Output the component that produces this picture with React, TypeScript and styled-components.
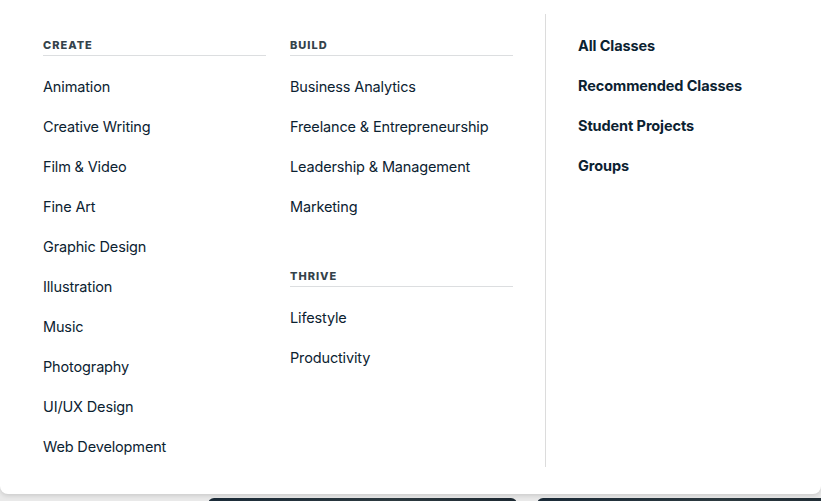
import React from 'react';
import styled, { createGlobalStyle } from 'styled-components';

const GlobalStyle = createGlobalStyle`
  html, body {
    margin: 0;
    padding: 0;
    height: 100%;
    overflow: hidden;
    background: #e9e9e9;
    font-family: Inter, 'Liberation Sans', sans-serif;
  }
  * {
    box-sizing: border-box;
  }
`;

const Page = styled.div`
  width: 821px;
  height: 501px;
  display: flex;
  flex-direction: column;
  overflow: hidden;
`;

const Panel = styled.nav`
  position: relative;
  z-index: 2;
  flex-shrink: 0;
  height: 494px;
  background: #ffffff;
  border-radius: 0 0 8px 8px;
  box-shadow: 0 2px 4px rgba(0, 0, 0, 0.12);
  padding: 14px 0 27px 43px;
  display: flex;
  flex-direction: row;
  align-items: stretch;
`;

const Categories = styled.div`
  display: grid;
  grid-template-columns: 223px 223px;
  column-gap: 24px;
  padding-top: 23px;
`;

const Column = styled.div`
  display: flex;
  flex-direction: column;
`;

const Section = styled.section<{ $spaced?: boolean }>`
  margin-top: ${(p) => (p.$spaced ? '51px' : '0')};
`;

const Heading = styled.h4`
  margin: 0;
  padding-bottom: 2px;
  border-bottom: 1px solid #dcdee0;
  font-size: 11px;
  line-height: 16px;
  font-weight: 800;
  letter-spacing: 1px;
  text-transform: uppercase;
  color: #34424a;
`;

const LinkList = styled.ul<{ $bold?: boolean }>`
  list-style: none;
  margin: ${(p) => (p.$bold ? '0' : '21px 0 0 0')};
  padding: 0;
  display: flex;
  flex-direction: column;
  gap: 20px;
`;

const LinkItem = styled.li<{ $bold?: boolean }>`
  font-size: 14.5px;
  line-height: 20px;
  letter-spacing: ${(p) => (p.$bold ? '-0.1px' : '-0.15px')};
  font-weight: ${(p) => (p.$bold ? 700 : 400)};
  color: #0b2231;
  white-space: nowrap;
  cursor: pointer;
`;

const Divider = styled.div`
  width: 1px;
  background: #dcdcdc;
  margin-left: 32px;
`;

const Featured = styled.div`
  padding: 22px 0 0 32px;
`;

const Backdrop = styled.div`
  display: flex;
  flex-direction: row;
  gap: 20px;
  padding: 4px 0 0 208px;
`;

const CardTop = styled.div`
  width: 309px;
  height: 40px;
  border-radius: 6px;
  background: linear-gradient(90deg, #1b2b38 0%, #2d3a40 60%, #1e2a33 100%);
  flex-shrink: 0;
`;

const create = [
  'Animation',
  'Creative Writing',
  'Film & Video',
  'Fine Art',
  'Graphic Design',
  'Illustration',
  'Music',
  'Photography',
  'UI/UX Design',
  'Web Development',
];

const build = [
  'Business Analytics',
  'Freelance & Entrepreneurship',
  'Leadership & Management',
  'Marketing',
];

const thrive = ['Lifestyle', 'Productivity'];

const featured = ['All Classes', 'Recommended Classes', 'Student Projects', 'Groups'];

const CategorySection: React.FC<{ title: string; items: string[]; spaced?: boolean }> = ({
  title,
  items,
  spaced,
}) => (
  <Section $spaced={spaced}>
    <Heading>{title}</Heading>
    <LinkList>
      {items.map((item) => (
        <LinkItem key={item}>{item}</LinkItem>
      ))}
    </LinkList>
  </Section>
);

export default function App() {
  return (
    <Page>
      <GlobalStyle />
      <Panel>
        <Categories>
          <Column>
            <CategorySection title="Create" items={create} />
          </Column>
          <Column>
            <CategorySection title="Build" items={build} />
            <CategorySection title="Thrive" items={thrive} spaced />
          </Column>
        </Categories>
        <Divider />
        <Featured>
          <LinkList $bold>
            {featured.map((item) => (
              <LinkItem key={item} $bold>
                {item}
              </LinkItem>
            ))}
          </LinkList>
        </Featured>
      </Panel>
      <Backdrop>
        <CardTop />
        <CardTop />
      </Backdrop>
    </Page>
  );
}
